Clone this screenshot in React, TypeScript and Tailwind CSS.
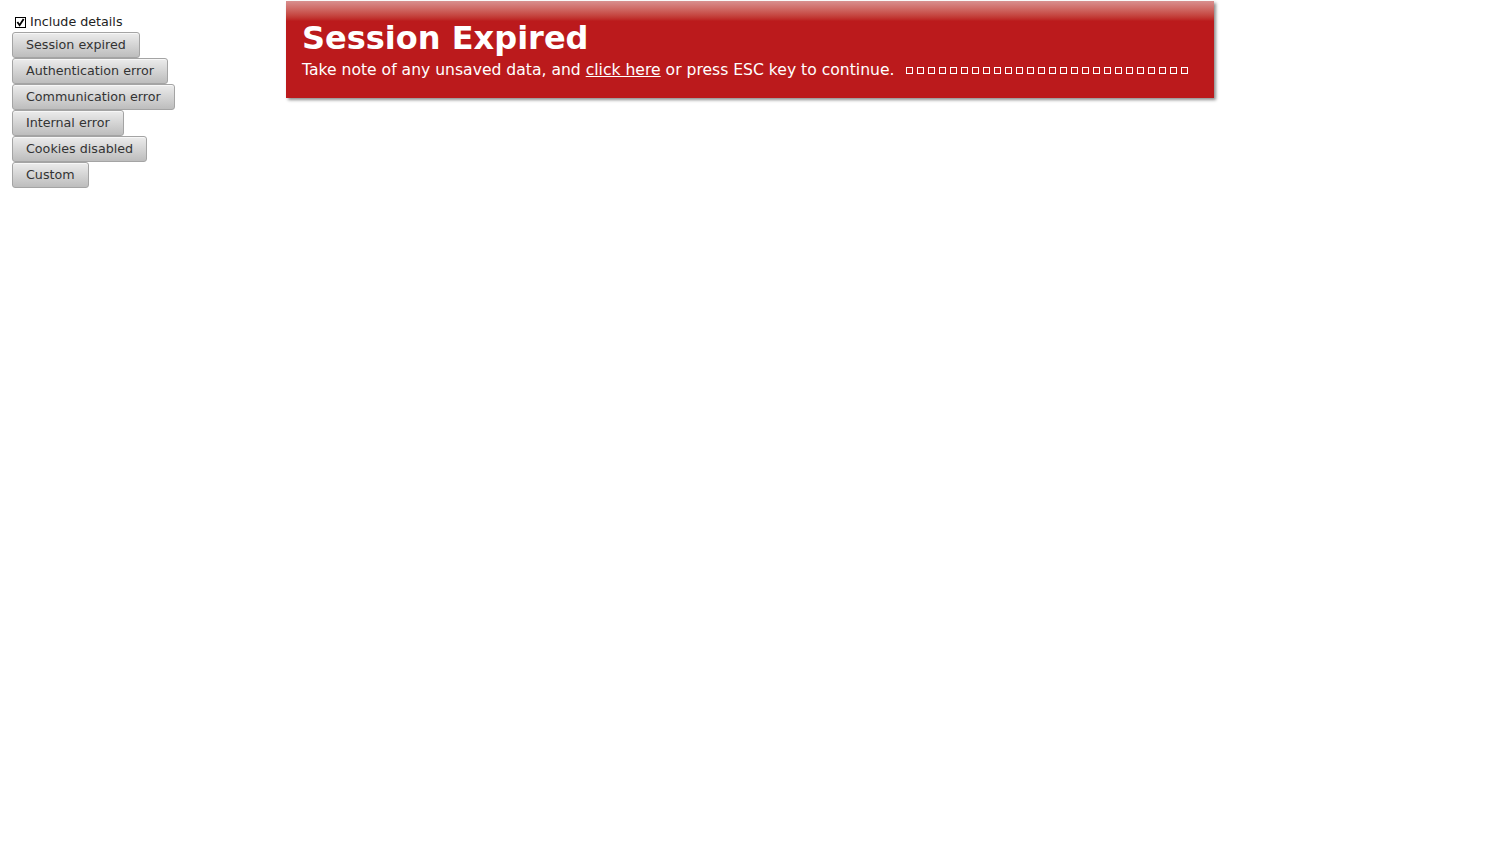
import React from 'react';

const buttons = [
    'Session expired',
    'Authentication error',
    'Communication error',
    'Internal error',
    'Cookies disabled',
    'Custom',
];

export default function App() {
    const boxes = Array.from({ length: 26 });
    return (
        <div className="relative min-h-screen bg-white font-['DejaVu_Sans',sans-serif]">
            <div className="flex flex-col items-start pl-3 pt-[12px]">
                <label className="flex items-center gap-[4px] pl-[3px] h-[20px] text-[12.7px] text-[#222]">
                    <span className="flex items-center justify-center w-[11px] h-[11px] border border-black bg-white">
                        <svg viewBox="0 0 10 10" className="w-[9px] h-[9px]">
                            <path d="M1.5 4.5 L4 8 L8.5 1" fill="none" stroke="black" strokeWidth="2" />
                        </svg>
                    </span>
                    Include details
                </label>
                {buttons.map((b) => (
                    <button
                        key={b}
                        className="h-[26px] px-[13px] text-[12.7px] text-[#333] border border-[#a4a4a4] rounded-[3px] bg-gradient-to-b from-[#ececec] to-[#bdbdbd] shadow-[inset_0_1px_0_rgba(255,255,255,0.6)]"
                    >
                        {b}
                    </button>
                ))}
            </div>

            <div className="absolute top-[1px] left-[286px] w-[928px] h-[97px] bg-[#bb1a1c] shadow-[2px_2px_3px_rgba(0,0,0,0.45)] text-white">
                <div className="absolute inset-x-0 top-0 h-[20px] bg-gradient-to-b from-[#d88f8f] to-[#bb1a1c]" />
                <div className="relative pl-4 pt-[17px]">
                    <h1 className="text-[32px] font-bold leading-[40px]">Session Expired</h1>
                    <div className="flex items-center text-[15.6px] leading-[22px] mt-[1px]">
                        <span>
                            Take note of any unsaved data, and <span className="underline">click here</span> or press ESC key to continue.
                        </span>
                        <span className="flex gap-[4px] ml-[11px]">
                            {boxes.map((_, i) => (
                                <span key={i} className="w-[7px] h-[7px] border border-white" />
                            ))}
                        </span>
                    </div>
                </div>
            </div>
        </div>
    );
}
